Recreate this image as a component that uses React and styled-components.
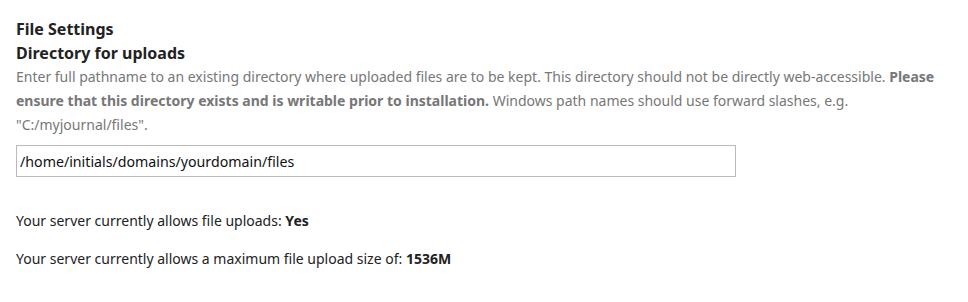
import React from 'react';
import styled, { createGlobalStyle } from 'styled-components';

const GlobalStyle = createGlobalStyle`
  body {
    margin: 0;
    background: #fff;
    font-family: "Noto Sans", "Open Sans", sans-serif;
  }
`;

const Section = styled.fieldset`
  border: 0;
  margin: 0;
  min-width: 0;
  padding: 17px 16px 0 16px;
`;

const Legend = styled.h3`
  margin: 0;
  font-size: 16px;
  line-height: 24px;
  font-weight: 700;
  color: #222;
`;

const Label = styled.label`
  display: block;
  font-size: 16px;
  line-height: 24px;
  font-weight: 700;
  color: #222;
`;

const Description = styled.p`
  margin: 0;
  font-size: 14px;
  line-height: 24px;
  color: #777;
  strong {
    font-weight: 700;
  }
`;

const TextInput = styled.input`
  display: block;
  box-sizing: border-box;
  width: 720px;
  height: 32px;
  margin: 8px 0 0;
  padding: 0 3px;
  border: 1px solid #bbb;
  border-radius: 0;
  font-family: inherit;
  font-size: 14.2px;
  color: #111;
  outline: none;
`;

const Note = styled.p`
  margin: ${(p) => p.$top}px 0 0;
  font-size: 14px;
  line-height: 24px;
  color: #222;
`;

export default function App() {
  return (
    <>
      <GlobalStyle />
      <Section>
        <Legend>File Settings</Legend>
        <Label htmlFor="filesDir">Directory for uploads</Label>
        <Description>
          Enter full pathname to an existing directory where uploaded files are to be kept. This
          directory should not be directly web-accessible.{' '}
          <strong>Please ensure that this directory exists and is writable prior to installation.</strong>{' '}
          Windows path names should use forward slashes, e.g. "C:/myjournal/files".
        </Description>
        <TextInput id="filesDir" defaultValue="/home/initials/domains/yourdomain/files" />
        <Note $top={32}>
          Your server currently allows file uploads: <strong>Yes</strong>
        </Note>
        <Note $top={14}>
          Your server currently allows a maximum file upload size of: <strong>1536M</strong>
        </Note>
      </Section>
    </>
  );
}
